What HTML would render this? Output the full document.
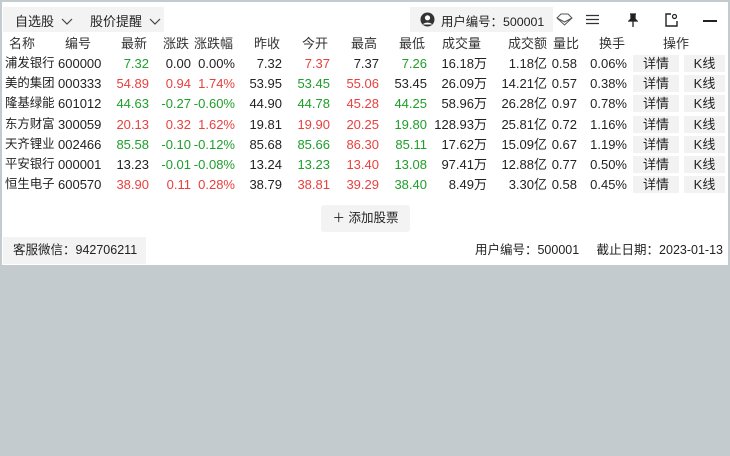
<!DOCTYPE html>
<html><head><meta charset="utf-8"><style>
body{margin:0;width:730px;height:456px;background:#c4cbce;font-family:"Liberation Sans","Noto Sans CJK SC",sans-serif;font-size:13px;color:#222;position:relative;overflow:hidden}
.panel{position:absolute;left:2px;top:2px;width:726px;height:263px;background:#fff}
.tabs{position:absolute;left:3px;top:7px;width:161px;height:25px;background:#f3f3f3}
.tabs span{position:absolute;top:4px}
.user{position:absolute;left:410px;top:7px;width:143px;height:25px;background:#f3f3f3}
.row{position:absolute;left:0;width:730px;height:20px;line-height:21px}
.row div{position:absolute;top:0;text-align:right;white-space:nowrap}
.c1{left:5px;text-align:left!important;font-size:12.4px}
.c2{left:58px;text-align:left!important}
.c3{left:100px;width:49px}.c4{left:149px;width:42px}.c5{left:191px;width:44px}.c6{left:235px;width:47px}
.c7{left:282px;width:48px}.c8{left:330px;width:49px}.c9{left:379px;width:48px}.c10{left:427px;width:60px}
.c11{left:487px;width:60px}.c12{left:547px;width:30px}.c13{left:577px;width:50px}
.b1{left:633px;width:46px;top:2px!important;height:17px;line-height:17px;background:#f2f2f2;text-align:center!important}
.b2{left:684px;width:41px;top:2px!important;height:17px;line-height:17px;background:#f2f2f2;text-align:center!important}
.g{color:#1e9e2a}.r{color:#e8403f}
.hd div{color:#333;font-size:13px}
</style></head><body>
<div class="panel"></div>
<div class="tabs"><span style="left:12px">自选股 <svg style="margin-left:3px" width="12" height="8" viewBox="0 0 12 8"><path d="M1 1l5 5 5-5" fill="none" stroke="#444" stroke-width="1.2"/></svg></span><span style="left:87px">股价提醒 <svg style="margin-left:3px" width="12" height="8" viewBox="0 0 12 8"><path d="M1 1l5 5 5-5" fill="none" stroke="#444" stroke-width="1.2"/></svg></span></div>
<div class="user"><svg style="position:absolute;left:10px;top:5px" width="15" height="15" viewBox="0 0 15 15"><circle cx="7.5" cy="7.5" r="7" fill="#333"/><circle cx="7.5" cy="5.8" r="2.6" fill="#fff"/><path d="M3 12.5c1-2.5 8-2.5 9 0" fill="#fff"/></svg><span style="position:absolute;left:31px;top:5px;font-size:12.4px">用户编号：500001</span></div>
<svg style="position:absolute;left:556px;top:13px" width="17" height="13" viewBox="0 0 17 13"><path d="M1 5l4-4h7l4 4-7.5 7z M1 5l7.5 4 7.5-4" fill="none" stroke="#555" stroke-width="1"/></svg>
<svg style="position:absolute;left:586px;top:14px" width="13" height="11"><path d="M0 1.5h13M0 5.5h13M0 9.5h13" stroke="#333" stroke-width="1.3"/></svg>
<svg style="position:absolute;left:628px;top:13px" width="10" height="14" viewBox="0 0 10 14"><path d="M2 1h6M3 1v5L1 8h8L7 6V1M5 8v6" fill="#222" stroke="#222" stroke-width="1.3"/></svg>
<svg style="position:absolute;left:665px;top:13px" width="13" height="14" viewBox="0 0 13 14"><path d="M6 1H1v12h11V8" fill="none" stroke="#222" stroke-width="1.4"/><circle cx="9.5" cy="3.5" r="2" fill="none" stroke="#222" stroke-width="1.2"/></svg>
<div style="position:absolute;left:703px;top:20px;width:14px;height:1.5px;background:#222"></div>

<div class="row hd" style="top:33px"><div class="c1" style="left:9px">名称</div><div class="c2" style="left:65px">编号</div><div class="c3" style="width:47px">最新</div><div class="c4" style="width:40px">涨跌</div><div class="c5" style="width:42px">涨跌幅</div><div class="c6" style="width:45px">昨收</div><div class="c7" style="width:46px">今开</div><div class="c8" style="width:47px">最高</div><div class="c9" style="width:46px">最低</div><div class="c10" style="width:54px">成交量</div><div class="c11">成交额</div><div class="c12" style="left:549px">量比</div><div class="c13" style="width:48px">换手</div><div style="left:663px">操作</div></div>

<div class="row" style="top:53px"><div class="c1">浦发银行</div><div class="c2">600000</div><div class="c3 g">7.32</div><div class="c4">0.00</div><div class="c5">0.00%</div><div class="c6">7.32</div><div class="c7 r">7.37</div><div class="c8">7.37</div><div class="c9 g">7.26</div><div class="c10">16.18万</div><div class="c11">1.18亿</div><div class="c12">0.58</div><div class="c13">0.06%</div><div class="b1">详情</div><div class="b2">K线</div></div>
<div class="row" style="top:73px"><div class="c1">美的集团</div><div class="c2">000333</div><div class="c3 r">54.89</div><div class="c4 r">0.94</div><div class="c5 r">1.74%</div><div class="c6">53.95</div><div class="c7 g">53.45</div><div class="c8 r">55.06</div><div class="c9">53.45</div><div class="c10">26.09万</div><div class="c11">14.21亿</div><div class="c12">0.57</div><div class="c13">0.38%</div><div class="b1">详情</div><div class="b2">K线</div></div>
<div class="row" style="top:93px"><div class="c1">隆基绿能</div><div class="c2">601012</div><div class="c3 g">44.63</div><div class="c4 g">-0.27</div><div class="c5 g">-0.60%</div><div class="c6">44.90</div><div class="c7 g">44.78</div><div class="c8 r">45.28</div><div class="c9 g">44.25</div><div class="c10">58.96万</div><div class="c11">26.28亿</div><div class="c12">0.97</div><div class="c13">0.78%</div><div class="b1">详情</div><div class="b2">K线</div></div>
<div class="row" style="top:114px"><div class="c1">东方财富</div><div class="c2">300059</div><div class="c3 r">20.13</div><div class="c4 r">0.32</div><div class="c5 r">1.62%</div><div class="c6">19.81</div><div class="c7 r">19.90</div><div class="c8 r">20.25</div><div class="c9 g">19.80</div><div class="c10">128.93万</div><div class="c11">25.81亿</div><div class="c12">0.72</div><div class="c13">1.16%</div><div class="b1">详情</div><div class="b2">K线</div></div>
<div class="row" style="top:134px"><div class="c1">天齐锂业</div><div class="c2">002466</div><div class="c3 g">85.58</div><div class="c4 g">-0.10</div><div class="c5 g">-0.12%</div><div class="c6">85.68</div><div class="c7 g">85.66</div><div class="c8 r">86.30</div><div class="c9 g">85.11</div><div class="c10">17.62万</div><div class="c11">15.09亿</div><div class="c12">0.67</div><div class="c13">1.19%</div><div class="b1">详情</div><div class="b2">K线</div></div>
<div class="row" style="top:154px"><div class="c1">平安银行</div><div class="c2">000001</div><div class="c3">13.23</div><div class="c4 g">-0.01</div><div class="c5 g">-0.08%</div><div class="c6">13.24</div><div class="c7 g">13.23</div><div class="c8 r">13.40</div><div class="c9 g">13.08</div><div class="c10">97.41万</div><div class="c11">12.88亿</div><div class="c12">0.77</div><div class="c13">0.50%</div><div class="b1">详情</div><div class="b2">K线</div></div>
<div class="row" style="top:174px"><div class="c1">恒生电子</div><div class="c2">600570</div><div class="c3 r">38.90</div><div class="c4 r">0.11</div><div class="c5 r">0.28%</div><div class="c6">38.79</div><div class="c7 r">38.81</div><div class="c8 r">39.29</div><div class="c9 g">38.40</div><div class="c10">8.49万</div><div class="c11">3.30亿</div><div class="c12">0.58</div><div class="c13">0.45%</div><div class="b1">详情</div><div class="b2">K线</div></div>

<div style="position:absolute;left:321px;top:205px;width:89px;height:27px;background:#f3f3f3;border-radius:3px;line-height:27px;font-size:12.5px;text-align:center">＋ 添加股票</div>
<div style="position:absolute;left:3px;top:237px;width:143px;height:27px;background:#f3f3f3;line-height:27px;font-size:12.5px;padding-left:10px;box-sizing:border-box">客服微信：942706211</div>
<div style="position:absolute;right:7px;top:237px;height:27px;line-height:27px;font-size:12.5px">用户编号：500001 &nbsp;&nbsp;&nbsp; 截止日期：2023-01-13</div>
</body></html>
